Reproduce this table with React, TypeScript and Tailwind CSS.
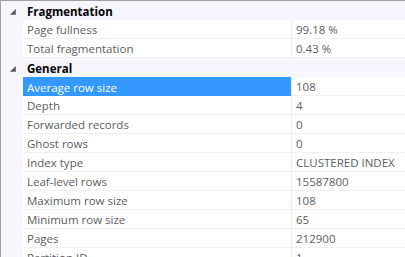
import React from 'react';

type Prop = { name: string; value: string; selected?: boolean };
type Category = { title: string; items: Prop[] };

const categories: Category[] = [
  {
    title: 'Fragmentation',
    items: [
      { name: 'Page fullness', value: '99.18 %' },
      { name: 'Total fragmentation', value: '0.43 %' },
    ],
  },
  {
    title: 'General',
    items: [
      { name: 'Average row size', value: '108', selected: true },
      { name: 'Depth', value: '4' },
      { name: 'Forwarded records', value: '0' },
      { name: 'Ghost rows', value: '0' },
      { name: 'Index type', value: 'CLUSTERED INDEX' },
      { name: 'Leaf-level rows', value: '15587800' },
      { name: 'Maximum row size', value: '108' },
      { name: 'Minimum row size', value: '65' },
      { name: 'Pages', value: '212900' },
      { name: 'Partition ID', value: '1' },
    ],
  },
];

const Expander = () => (
  <svg width="6" height="6" viewBox="0 0 6 6" className="ml-[9px]">
    <polygon points="5.5,0.5 5.5,5.5 0.5,5.5" fill="#5a5a5a" stroke="#5a5a5a" strokeWidth="0.6" />
  </svg>
);

const CategoryRow = ({ title }: { title: string }) => (
  <div className="flex h-[19px] items-center bg-[#f6f6fc] pt-[2px]">
    <div className="w-[22px] shrink-0 flex items-center">
      <Expander />
    </div>
    <span className="pl-[4px] font-bold text-black text-[11.5px]">{title}</span>
  </div>
);

const PropRow = ({ name, value, selected }: Prop) => (
  <div className="flex h-[19px]">
    <div className="w-[22px] shrink-0 bg-[#f6f6fc]" />
    <div
      className={
        selected
          ? 'w-[268px] shrink-0 flex items-center pl-[4px] pt-[2px] bg-[#3399ff] text-white'
          : 'w-[268px] shrink-0 flex items-center pl-[4px] pt-[2px] border-b border-[#f0f0f0] text-[#5c5c5c]'
      }
    >
      {name}
    </div>
    <div className="w-px shrink-0 bg-[#ececec]" />
    <div className="flex-1 flex items-center pl-[4px] pt-[2px] border-b border-[#f0f0f0] text-[#5c5c5c]">
      {value}
    </div>
  </div>
);

const App = () => {
  return (
    <div
      className="w-[405px] h-[257px] overflow-hidden bg-white border-t border-l border-[#a0a0a0] text-[11.5px] leading-none"
      style={{ fontFamily: '"Open Sans", "Noto Sans", sans-serif' }}
    >
      {categories.map((cat) => (
        <div key={cat.title}>
          <CategoryRow title={cat.title} />
          {cat.items.map((p) => (
            <PropRow key={p.name} {...p} />
          ))}
        </div>
      ))}
    </div>
  );
};

export default App;
